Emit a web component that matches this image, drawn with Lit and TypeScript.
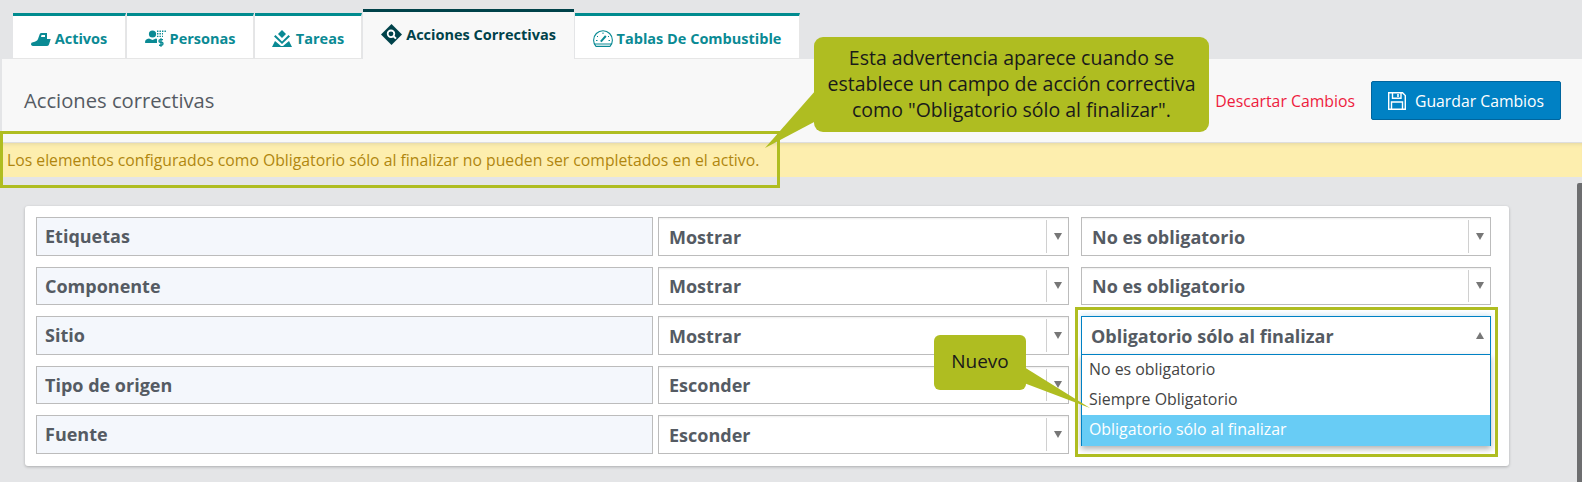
import { LitElement, html, css, svg } from "lit";
import { customElement } from "lit/decorators.js";

const icons: Record<string, unknown> = {
  boat: html`<svg class="ic" width="20" height="13" viewBox="0 0 20 13" style="margin-top:3px"><path fill="currentColor" d="M7 6 8.800 1Q9.200 0 10.500 0H16V6H19.700L18 11.500Q17.500 13 15.500 13H3Q0 13 0 11 0 9.500 2 9.200 6 8.500 7 6Z"/><path fill="#fff" d="M10.500 2H14V4H10Z"/></svg>`,
  people: html`<svg class="ic" width="21" height="17" viewBox="0 0 21 17"><circle cx="7.500" cy="4" r="3.600" fill="currentColor"/><path fill="currentColor" d="M0 12.500Q0 9 4 8.600L7.500 10 11 8.600 12 9V13H1.500Q0 13 0 12.500Z"/><path fill="none" stroke="currentColor" stroke-width="1.400" d="M18 9.600H15.200Q14 9.600 14 11 14 12.200 15.200 12.300H16.400Q18 12.400 18 13.800 18 15.200 16.400 15.200H14M16 8.200V16.800"/><path stroke="currentColor" stroke-width="1.400" stroke-dasharray="1.400 1.100" d="M12 1.200H21M12 3.800H18M12 6.400H18"/></svg>`,
  tasks: html`<svg class="ic" width="20" height="17" viewBox="0 0 20 17"><path fill="currentColor" d="M10 0 14 4 10 8 6 4Z"/><path fill="currentColor" d="M3.500 5 10 11.500 16.500 5 18 6.500 10 14 2 6.500Z"/><path fill="currentColor" d="M3 11 9 16H11L17 11 20 17H0Z"/></svg>`,
  action: html`<svg class="ic" width="21" height="21" viewBox="0 0 21 21"><path fill="#00424a" d="M10.500 0 21 10.500 10.500 21 0 10.500Z"/><circle cx="10" cy="9.800" r="3.300" fill="none" stroke="#fff" stroke-width="1.800"/><path stroke="#fff" stroke-width="2" d="M12.500 12.200 15 14.600"/></svg>`,
  gauge: html`<svg class="ic" width="20" height="17" viewBox="0 0 20 17"><path fill="none" stroke="currentColor" stroke-width="1.100" d="M3 16.400Q.6 13.600.6 10.200C.6 5 4.800.7 10 .7S19.400 5 19.400 10.200Q19.400 13.600 17 16.400Z"/><path stroke="currentColor" stroke-width="1" d="M1.500 14H18.500"/><path stroke="currentColor" stroke-width="2" d="M7.800 11.600 12.800 6"/><path stroke="currentColor" stroke-width="1" d="M10 2.500V4M4 6 5 7M16 6 15 7M3 10.500H4.500M15.500 10.500H17"/></svg>`,
};

const tabs = [
  { label: "Activos", icon: "boat", width: 113 },
  { label: "Personas", icon: "people", width: 127 },
  { label: "Tareas", icon: "tasks", width: 107 },
  { label: "Acciones Correctivas", icon: "action", width: 211, active: true },
  { label: "Tablas De Combustible", icon: "gauge", width: 225 },
];

const rows = [
  { label: "Etiquetas", show: "Mostrar", req: "No es obligatorio" },
  { label: "Componente", show: "Mostrar", req: "No es obligatorio" },
  { label: "Sitio", show: "Mostrar", req: "Obligatorio sólo al finalizar", open: true },
  { label: "Tipo de origen", show: "Esconder", req: "" },
  { label: "Fuente", show: "Esconder", req: "" },
];

@customElement("app-root")
export class AppRoot extends LitElement {
  static styles = css`
    :host { display: block; width: 1582px; height: 482px; overflow: hidden; font-family: "Open Sans", sans-serif; }
    .page { position: relative; height: 482px; background: #e4e5e7; overflow: hidden; color: #555b63; }
    .tabs { display: flex; align-items: flex-end; gap: 1px; height: 59px; padding-left: 13px; box-sizing: border-box; }
    .tab { box-sizing: border-box; height: 46px; display: flex; justify-content: center; align-items: center; gap: 4px; background: #fff; border-top: 3px solid #008b8f; border-right: 1px solid #e6e6e6; border-bottom: 1px solid #e6e6e6; color: #0a8a94; font-size: 14.5px; font-weight: 700; padding-top: 2px; white-space: nowrap; }
    .tab.active { height: 50px; background: #f8f8f8; border-top-color: #00424a; border-bottom: 0; border-right: 0; color: #00424a; padding-top: 0; padding-bottom: 2px; }
    .ic { flex: none; display: block; }
    .head { box-sizing: border-box; margin-left: 2px; height: 84px; background: #f8f8f8; border-bottom: 1px solid #dedede; display: flex; align-items: center; padding: 0 21px 0 22px; }
    .title { font-size: 20.2px; flex: 1; padding-bottom: 2px; }
    .discard { color: #ee1c3e; font-size: 15.8px; margin-right: 16px; }
    .save { box-sizing: border-box; width: 190px; height: 39px; display: flex; align-items: center; gap: 9px; padding-left: 16px; background: #0081c4; border: 1px solid #00659e; border-radius: 2px; color: #fff; font-size: 15.75px; white-space: nowrap; }
    .banner { box-sizing: border-box; height: 34px; background: #fdeeae; box-shadow: inset 0 4px 4px -3px #e3d5a0; color: #b0860e; font-size: 15.75px; line-height: 35px; padding-left: 7px; white-space: nowrap; }
    .card { box-sizing: border-box; position: absolute; left: 25px; top: 206px; width: 1484px; height: 260px; background: #fff; border-radius: 3px; box-shadow: 0 1px 3px rgba(0,0,0,.25); padding: 11px 17px 0 11px; display: grid; grid-template-rows: repeat(5, 38.5px); row-gap: 11px; }
    .row { display: grid; grid-template-columns: 617px 411px 417px; column-gap: 5px; }
    .row > :last-child { margin-left: 7px; }
    .label { box-sizing: border-box; background: #f4f7fc; border: 1px solid #bcbcbc; font-size: 18px; font-weight: 700; padding-left: 8px; display: flex; align-items: center; }
    .select { box-sizing: border-box; position: relative; display: flex; background: #fff; border: 1px solid #bcbcbc; box-shadow: inset 0 2px 2px -1px #eee; font-size: 18px; font-weight: 700; }
    .select .val { flex: 1; padding: 1px 0 0 10px; display: flex; align-items: center; }
    .select.open .val { padding-left: 9px; }
    .select .btn { width: 21px; margin: 2px 0; border-left: 1px solid #d0d0d0; display: flex; align-items: center; justify-content: center; }
    .arrow { width: 0; height: 0; border-left: 4px solid transparent; border-right: 4px solid transparent; border-top: 7px solid #777; }
    .select.open { border-color: #0081c4; box-shadow: 0 -2px 4px rgba(0,129,196,.15); z-index: 2; }
    .select.open .btn { border-left: 0; }
    .select.open .arrow { border-top: 0; border-bottom: 7px solid #777; }
    .menu { position: absolute; left: -1px; right: -1px; top: 37px; height: 92px; box-sizing: border-box; background: #fff; border: 1px solid #0081c4; box-shadow: 0 3px 6px rgba(0,0,0,.3); font-weight: 400; font-size: 15.9px; color: #444; display: grid; grid-template-rows: 30px 30px 31px; }
    .menu div { padding-left: 7px; line-height: 28px; }
    .menu .sel { background: #68ccf5; color: #fff; }
    .scroll { position: absolute; right: 0; top: 183px; width: 5px; height: 299px; background: #6d6e70; border-radius: 2px 0 0 0; }
    .mark { position: absolute; box-sizing: border-box; border: 3px solid #afbd21; z-index: 3; }
    .m1 { left: 0; top: 131px; width: 780px; height: 57px; }
    .m2 { left: 1075px; top: 307px; width: 423px; height: 150px; }
    .tails { position: absolute; left: 0; top: 0; z-index: 4; }
    .bubble { position: absolute; z-index: 5; background: #afbd21; color: #1a1a1a; display: flex; align-items: center; justify-content: center; text-align: center; box-sizing: border-box; }
    .b1 { left: 814px; top: 37px; width: 395px; height: 95px; border-radius: 9px; font-size: 19.5px; line-height: 26px; padding-bottom: 2px; }
    .b2 { left: 934px; top: 335px; width: 92px; height: 55px; border-radius: 6px; font-size: 19px; padding-bottom: 3px; }
  `;

  render() {
    return html`<div class="page">
      <nav class="tabs">
        ${tabs.map(t => html`<div class="tab ${t.active ? "active" : ""}" style="width:${t.width}px">${icons[t.icon]}<span>${t.label}</span></div>`)}
      </nav>
      <header class="head">
        <div class="title">Acciones correctivas</div>
        <div class="discard">Descartar Cambios</div>
        <div class="save">
          <svg width="18" height="18" viewBox="0 0 18 18" fill="none" stroke="#fff" stroke-width="1.400"><path d="M.7.7H14.500L17.300 3.500V17.300H.7Z"/><path d="M4.500.7V6.300H13V.7M3.500 17.300V10H14.500V17.300"/><path d="M10 2V5" stroke-width="1.600"/></svg>
          <span>Guardar Cambios</span>
        </div>
      </header>
      <div class="banner">Los elementos configurados como Obligatorio sólo al finalizar no pueden ser completados en el activo.</div>
      <section class="card">
        ${rows.map(r => html`<div class="row">
          <div class="label">${r.label}</div>
          <div class="select"><div class="val">${r.show}</div><div class="btn"><i class="arrow"></i></div></div>
          ${r.req ? html`<div class="select ${r.open ? "open" : ""}"><div class="val">${r.req}</div><div class="btn"><i class="arrow"></i></div>
            ${r.open ? html`<div class="menu"><div>No es obligatorio</div><div>Siempre Obligatorio</div><div class="sel">Obligatorio sólo al finalizar</div></div>` : ""}
          </div>` : html`<div></div>`}
        </div>`)}
      </section>
      <div class="scroll"></div>
      <div class="mark m1"></div>
      <div class="mark m2"></div>
      <svg class="tails" width="1582" height="482">${svg`
        <polygon fill="#afbd21" points="816,90 816,121 765,148"/>
        <polygon fill="#afbd21" points="1024,367 1024,383 1090,408"/>`}</svg>
      <div class="bubble b1"><div>Esta advertencia aparece cuando se<br>establece un campo de acción correctiva<br>como "Obligatorio sólo al finalizar".</div></div>
      <div class="bubble b2">Nuevo</div>
    </div>`;
  }
}
